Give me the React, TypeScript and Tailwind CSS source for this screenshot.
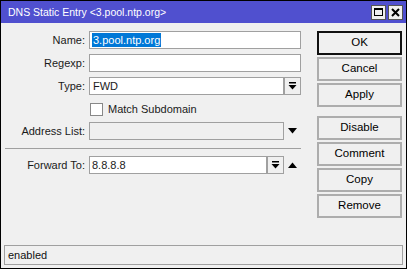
import React from 'react';

function Label({ children }: { children: React.ReactNode }) {
  return <span className="w-[88px] shrink-0 text-right pr-[4px]">{children}</span>;
}

function DownBtn() {
  return (
    <div className="w-[17px] h-[18px] border border-[#a0a0a0] bg-[#f0f0f0] flex items-center justify-center">
      <svg width="9" height="8" viewBox="0 0 9 8">
        <rect x="1" y="0" width="7" height="1.5" fill="#000" />
        <path d="M0.5 3 H8.5 L4.5 7.5 Z" fill="#000" />
      </svg>
    </div>
  );
}

function Btn({ label, primary }: { label: string; primary?: boolean }) {
  return (
    <button
      className={
        'w-[85px] h-[24px] bg-[#f0f0f0] text-[11.5px] text-black flex items-center justify-center ' +
        (primary ? 'border-2 border-[#111]' : 'border-2 border-[#adadad]')
      }
    >
      {label}
    </button>
  );
}

export default function App() {
  return (
    <div className="w-[407px] h-[269px] border border-black bg-[#f0f0f0] flex flex-col font-['Liberation_Sans',Arial,sans-serif] text-[11px] text-[#1a1a1a]">
      {/* title bar */}
      <div className="h-[22px] bg-[#5050cf] flex items-center justify-between pl-[7px] pr-[3px] shrink-0">
        <span className="text-white text-[10.5px] leading-none">DNS Static Entry &lt;3.pool.ntp.org&gt;</span>
        <div className="flex gap-[2px]">
          <div className="w-[15px] h-[15px] bg-[#f0f0f0] border border-[#555] flex items-center justify-center">
            <div className="w-[9px] h-[8px] border border-black border-t-2" />
          </div>
          <div className="w-[15px] h-[15px] bg-[#f0f0f0] border border-[#555] flex items-center justify-center">
            <svg width="9" height="9" viewBox="0 0 9 9">
              <path d="M1 1 L8 8 M8 1 L1 8" stroke="#000" strokeWidth="2" />
            </svg>
          </div>
        </div>
      </div>

      {/* body */}
      <div className="flex flex-1 pt-[8px]">
        <div className="w-[300px] flex flex-col">
          <div className="flex items-center h-[18px]">
            <Label>Name:</Label>
            <div className="flex-1 h-[18px] border border-[#a0a0a0] bg-white flex items-center pl-[2px]">
              <span className="bg-[#0078d7] text-white leading-[14px] px-[1px]">3.pool.ntp.org</span>
            </div>
          </div>
          <div className="flex items-center h-[18px] mt-[5px]">
            <Label>Regexp:</Label>
            <div className="flex-1 h-[18px] border border-[#a0a0a0] bg-white" />
          </div>
          <div className="flex items-center h-[18px] mt-[5px]">
            <Label>Type:</Label>
            <div className="flex-1 h-[18px] border border-[#a0a0a0] bg-white flex items-center pl-[3px]">FWD</div>
            <DownBtn />
          </div>
          <div className="flex items-center h-[16px] mt-[6px] pl-[89px]">
            <div className="w-[13px] h-[13px] border border-[#888] bg-white" />
            <span className="ml-[5px]">Match Subdomain</span>
          </div>
          <div className="flex items-center h-[18px] mt-[5px]">
            <Label>Address List:</Label>
            <div className="w-[195px] h-[18px] border border-[#a0a0a0] bg-[#f0f0f0]" />
            <div className="w-[17px] flex items-center justify-center">
              <svg width="9" height="6" viewBox="0 0 9 6">
                <path d="M0 0 H9 L4.5 5.5 Z" fill="#000" />
              </svg>
            </div>
          </div>
          <div className="ml-[4px] mt-[8px] h-px bg-[#a0a0a0]" />
          <div className="flex items-center h-[18px] mt-[7px]">
            <Label>Forward To:</Label>
            <div className="w-[178px] h-[18px] border border-[#a0a0a0] bg-white flex items-center pl-[2px]">8.8.8.8</div>
            <DownBtn />
            <div className="w-[17px] flex items-center justify-center">
              <svg width="9" height="6" viewBox="0 0 9 6">
                <path d="M0 6 H9 L4.5 0.5 Z" fill="#000" />
              </svg>
            </div>
          </div>
        </div>

        <div className="flex flex-col ml-[16px] gap-[2px]">
          <Btn label="OK" primary />
          <Btn label="Cancel" />
          <Btn label="Apply" />
          <div className="h-[5px]" />
          <Btn label="Disable" />
          <Btn label="Comment" />
          <Btn label="Copy" />
          <Btn label="Remove" />
        </div>
      </div>

      {/* status bar */}
      <div className="mx-[3px] mb-[3px] h-[20px] border border-[#a0a0a0] flex items-center pl-[3px] text-[#111]">enabled</div>
    </div>
  );
}
